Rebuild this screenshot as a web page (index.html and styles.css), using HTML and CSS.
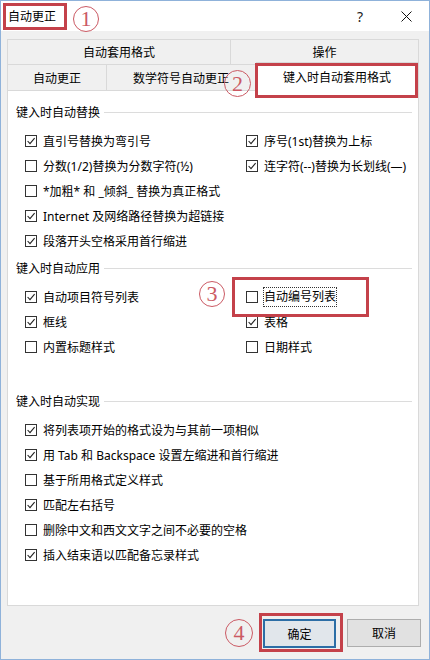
FILE: index.html
```html
<!DOCTYPE html>
<html lang="zh-CN">
<head>
    <meta charset="UTF-8">
    <meta name="viewport" content="width=device-width, initial-scale=1.0">
    <title>自动更正</title>
    <link rel="stylesheet" href="styles.css">
</head>
<body>

    <div class="window">

        <!-- Title bar -->
        <div class="titlebar">
            <span class="title">自动更正</span>
            <span class="circled">1</span>
            <span class="spacer"></span>
            <span class="tb-btn">?</span>
            <span class="tb-btn">
                <svg width="11" height="11" viewBox="0 0 11 11"><path d="M0.5 0.5 L10.5 10.5 M10.5 0.5 L0.5 10.5" stroke="#111" stroke-width="1" fill="none"/></svg>
            </span>
        </div>

        <div class="content">

            <!-- Tabs -->
            <div class="tabs">
                <div class="tab-row top">
                    <div class="tab tab-fmt">自动套用格式</div>
                    <div class="tab tab-ops">操作</div>
                </div>
                <div class="tab-row bottom">
                    <div class="tab tab-auto">自动更正</div>
                    <div class="tab tab-math">数学符号自动更正</div>
                    <div class="tab active">键入时自动套用格式</div>
                </div>
                <span class="circled tab-num">2</span>
            </div>

            <!-- Tab page -->
            <div class="panel">

                <div class="section-head">键入时自动替换</div>
                <div class="opts">
                    <div class="opt"><span class="cb on"><svg viewBox="0 0 10 10"><path d="M1.6 5 L4 7.6 L8.6 2.2"/></svg></span>直引号替换为弯引号</div>
                    <div class="opt"><span class="cb on"><svg viewBox="0 0 10 10"><path d="M1.6 5 L4 7.6 L8.6 2.2"/></svg></span>序号(1st)替换为上标</div>
                    <div class="opt"><span class="cb"></span>分数(1/2)替换为分数字符(½)</div>
                    <div class="opt"><span class="cb on"><svg viewBox="0 0 10 10"><path d="M1.6 5 L4 7.6 L8.6 2.2"/></svg></span>连字符(--)替换为长划线(—)</div>
                    <div class="opt wide"><span class="cb"></span>*加粗* 和 _倾斜_ 替换为真正格式</div>
                    <div class="opt wide"><span class="cb on"><svg viewBox="0 0 10 10"><path d="M1.6 5 L4 7.6 L8.6 2.2"/></svg></span>Internet 及网络路径替换为超链接</div>
                    <div class="opt wide"><span class="cb on"><svg viewBox="0 0 10 10"><path d="M1.6 5 L4 7.6 L8.6 2.2"/></svg></span>段落开头空格采用首行缩进</div>
                </div>

                <div class="section-head sec2">键入时自动应用</div>
                <div class="opts">
                    <div class="opt"><span class="cb on"><svg viewBox="0 0 10 10"><path d="M1.6 5 L4 7.6 L8.6 2.2"/></svg></span>自动项目符号列表</div>
                    <div class="opt flagged">
                        <span class="circled opt-num">3</span>
                        <span class="cb"></span><span class="focus">自动编号列表</span>
                    </div>
                    <div class="opt"><span class="cb on"><svg viewBox="0 0 10 10"><path d="M1.6 5 L4 7.6 L8.6 2.2"/></svg></span>框线</div>
                    <div class="opt"><span class="cb on"><svg viewBox="0 0 10 10"><path d="M1.6 5 L4 7.6 L8.6 2.2"/></svg></span>表格</div>
                    <div class="opt"><span class="cb"></span>内置标题样式</div>
                    <div class="opt"><span class="cb"></span>日期样式</div>
                </div>

                <div class="section-head sec3">键入时自动实现</div>
                <div class="opts">
                    <div class="opt wide"><span class="cb on"><svg viewBox="0 0 10 10"><path d="M1.6 5 L4 7.6 L8.6 2.2"/></svg></span>将列表项开始的格式设为与其前一项相似</div>
                    <div class="opt wide"><span class="cb on"><svg viewBox="0 0 10 10"><path d="M1.6 5 L4 7.6 L8.6 2.2"/></svg></span>用 Tab 和 Backspace 设置左缩进和首行缩进</div>
                    <div class="opt wide"><span class="cb"></span>基于所用格式定义样式</div>
                    <div class="opt wide"><span class="cb on"><svg viewBox="0 0 10 10"><path d="M1.6 5 L4 7.6 L8.6 2.2"/></svg></span>匹配左右括号</div>
                    <div class="opt wide"><span class="cb"></span>删除中文和西文文字之间不必要的空格</div>
                    <div class="opt wide"><span class="cb on"><svg viewBox="0 0 10 10"><path d="M1.6 5 L4 7.6 L8.6 2.2"/></svg></span>插入结束语以匹配备忘录样式</div>
                </div>

            </div>

            <!-- Buttons -->
            <div class="footer">
                <span class="circled">4</span>
                <div class="mark-btn">
                    <div class="btn default">确定</div>
                </div>
                <div class="btn">取消</div>
            </div>

        </div>
    </div>

</body>
</html>
```

FILE: styles.css
```css
* {
    box-sizing: border-box;
}

body {
    margin: 0;
    font-family: "Noto Sans", "Noto Sans CJK SC", sans-serif;
    font-size: 12px;
    color: #000;
}

.window {
    width: 430px;
    height: 660px;
    border: 1px solid #8fb2da;
    background-color: #f0f0f0;
    display: flex;
    flex-direction: column;
}

/* Title bar */
.titlebar {
    height: 30px;
    flex-shrink: 0;
    background-color: #fff;
    display: flex;
    align-items: flex-start;
    position: relative;
    z-index: 3;
}

.title {
    margin: 2px 0 0 2px;
    height: 27px;
    border: 3px solid #c4414a;
    padding: 0 8px 0 2px;
    line-height: 21px;
}

/* annotation numbers drawn on the screenshot */
.circled {
    width: 26px;
    height: 26px;
    flex-shrink: 0;
    border: 1px solid #cb5a64;
    border-radius: 50%;
    display: flex;
    align-items: center;
    justify-content: center;
    color: #cb5a64;
    font-family: "Liberation Serif", serif;
    font-size: 22px;
    line-height: 1;
}

.titlebar .circled {
    margin: 5px 0 0 6px;
}

.spacer {
    flex: 1;
}

.tb-btn {
    width: 46px;
    height: 30px;
    display: flex;
    align-items: center;
    justify-content: center;
    font-size: 14px;
    color: #222;
}

/* Dialog body */
.content {
    flex: 1;
    display: flex;
    flex-direction: column;
    padding: 8px 10px 0 6px;
}

.tabs {
    position: relative;
}

.tab-row {
    display: flex;
}

.tab-row.top {
    height: 25px;
}

.tab-row.bottom {
    height: 26px;
}

.tab {
    border: 1px solid #d9d9d9;
    border-bottom: none;
    border-left: none;
    background-color: #f0f0f0;
    display: flex;
    align-items: center;
    justify-content: center;
}

.tab:first-child {
    border-left: 1px solid #d9d9d9;
}

.tab-fmt {
    width: 224px;
}

.tab-ops {
    flex: 1;
}

.tab-auto {
    width: 100px;
}

.tab-math {
    width: 149px;
}

.tab.active {
    flex: 1;
    background-color: #fff;
    margin-top: -2px;
    margin-bottom: -1px;
    position: relative;
    z-index: 1;
}

.tab.active::after {
    content: "";
    position: absolute;
    left: -1px;
    right: 0;
    top: 0;
    bottom: -7px;
    border: 3px solid #c4414a;
}

.tab-num {
    position: absolute;
    left: 217px;
    top: 31px;
    width: 27px;
    height: 27px;
    z-index: 2;
}

/* Tab page */
.panel {
    flex: 1;
    background-color: #fff;
    border: 1px solid #d9d9d9;
    padding: 13px 6px 0 8px;
}

.section-head {
    display: flex;
    align-items: center;
    height: 16px;
    gap: 4px;
}

.section-head::after {
    content: "";
    flex: 1;
    height: 1px;
    background-color: #dcdcdc;
}

.sec2 {
    margin-top: 7px;
}

.sec3 {
    margin-top: 34px;
}

.opts {
    display: grid;
    grid-template-columns: 221px 1fr;
    grid-auto-rows: 25px;
    margin: 8px 0 0 9px;
}

.opt {
    display: flex;
    align-items: center;
    gap: 6px;
    white-space: nowrap;
}

.opt.wide {
    grid-column: 1 / -1;
}

.cb {
    width: 12px;
    height: 12px;
    border: 1px solid #333;
    background-color: #fff;
    flex-shrink: 0;
    display: flex;
}

.cb svg {
    width: 10px;
    height: 10px;
}

.cb svg path {
    stroke: #222;
    stroke-width: 1.1;
    fill: none;
}

.opt.flagged {
    position: relative;
}

.opt.flagged::after {
    content: "";
    position: absolute;
    left: -14px;
    top: -7px;
    width: 131px;
    height: 34px;
    border: 3px solid #c4414a;
}

.opt-num {
    position: absolute;
    left: -47px;
    top: -3px;
}

.focus {
    outline: 1px dotted #333;
    padding: 1px 0;
    line-height: 16px;
}

/* Buttons */
.footer {
    height: 53px;
    flex-shrink: 0;
    display: flex;
    align-items: center;
    justify-content: flex-end;
    margin-right: -2px;
}

.footer .circled {
    width: 28px;
    height: 28px;
    margin-right: 6px;
}

.mark-btn {
    display: flex;
    border: 3px solid #c4414a;
    padding: 3px 4px 1px 1px;
    margin-right: 4px;
}

.btn {
    width: 74px;
    height: 28px;
    background-color: #e1e1e1;
    border: 1px solid #adadad;
    display: flex;
    align-items: center;
    justify-content: center;
}

.btn.default {
    width: 73px;
    height: 29px;
    border: 2px solid #2c6ea6;
    background-color: #e1e6eb;
}
```
